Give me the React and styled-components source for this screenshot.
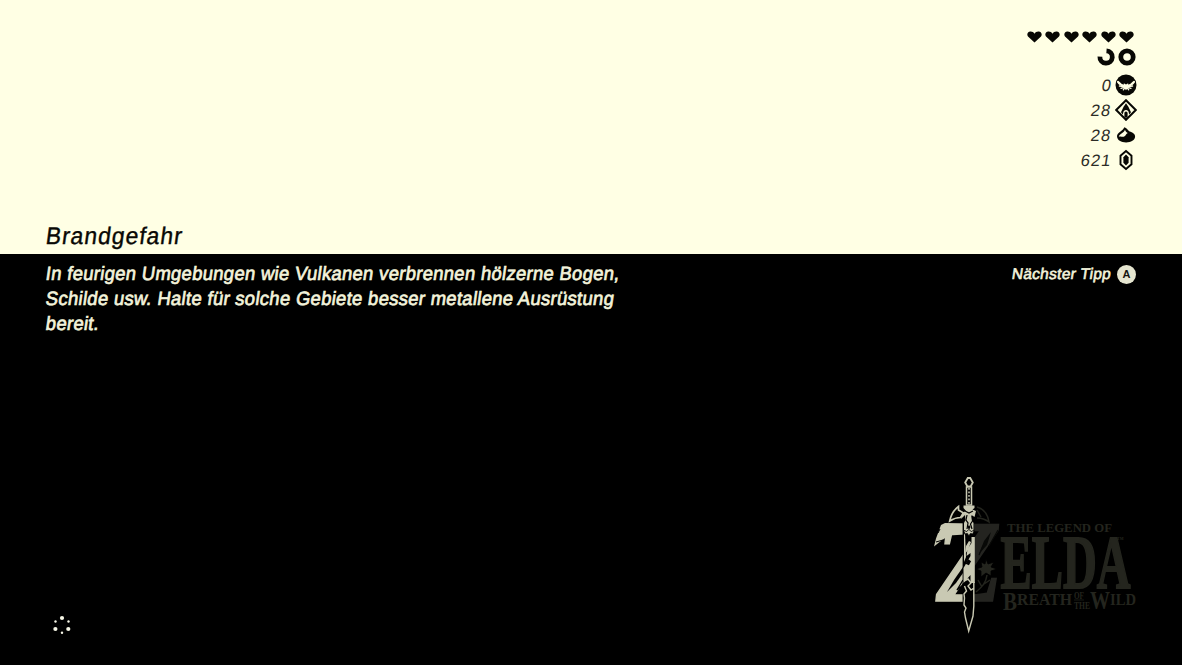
import React from "react";
import styled, { createGlobalStyle } from "styled-components";

const cream = "#ffffe4";
const ink = "#080804";
const pale = "#c9c9b3";
const faded = "#24251e";

const GlobalStyle = createGlobalStyle`
  * { box-sizing: border-box; }
  body { margin: 0; background: #000; overflow: hidden; }
`;

const Screen = styled.main`
  width: 1182px;
  height: 665px;
  display: flex;
  flex-direction: column;
  background: #000;
  font-family: "Liberation Sans", Arial, sans-serif;
`;

const Upper = styled.section`
  height: 254px;
  padding: 30px 45px 0 46px;
  display: flex;
  justify-content: space-between;
  background: ${cream};
  color: ${ink};
`;

const Title = styled.h1`
  margin: 0 0 4px;
  align-self: flex-end;
  font-size: 24px;
  line-height: 28px;
  font-weight: 400;
  letter-spacing: 1.1px;
  -webkit-text-stroke: 0.4px ${ink};
  transform: scaleX(0.95) skewX(-8deg);
  transform-origin: left center;
`;

const Status = styled.div`
  display: flex;
  flex-direction: column;
  align-items: flex-end;
`;

const Hearts = styled.div`
  display: flex;
  gap: 3.5px;
  height: 14px;
  margin-right: 3px;
  align-items: center;
`;

const Stamina = styled.div`
  display: flex;
  gap: 3px;
  height: 27px;
  padding-top: 4px;
  margin-bottom: 1px;
  margin-right: 1px;
`;

const Counter = styled.div`
  display: flex;
  align-items: center;
  gap: 4px;
  height: 25px;
  color: #2c2c26;
`;

const Amount = styled.span`
  font-size: 16.5px;
  line-height: 25px;
  letter-spacing: 1.1px;
  margin-right: -1px;
  padding-top: 1px;
  transform: skewX(-9deg);
`;

const Lower = styled.section`
  flex: 1;
  display: flex;
  flex-direction: column;
  justify-content: space-between;
  padding: 7px 45px 30px 46px;
  color: #f3f3db;
`;

const Row = styled.div`
  display: flex;
  justify-content: space-between;
  align-items: ${(p) => p.$align};
`;

const Tip = styled.p`
  margin: 0;
  display: flex;
  flex-direction: column;
  align-items: flex-start;
`;

const TipLine = styled.span`
  font-size: 19.2px;
  line-height: 25px;
  white-space: nowrap;
  letter-spacing: 0.33px;
  -webkit-text-stroke: 0.7px #f3f3db;
  transform: scaleX(0.96) skewX(-8.5deg);
  transform-origin: left center;
`;

const NextTip = styled.div`
  display: flex;
  align-items: center;
  gap: 6px;
  height: 26px;
  margin-right: 1px;
`;

const NextLabel = styled.span`
  font-size: 15.4px;
  letter-spacing: 0.33px;
  -webkit-text-stroke: 0.6px #f3f3db;
  transform: skewX(-8.5deg);
`;

const ButtonBadge = styled.span`
  width: 19px;
  height: 19px;
  border-radius: 50%;
  display: grid;
  place-items: center;
  background: #e6e6d0;
  color: #14140f;
  font-size: 11px;
  font-weight: 700;
`;

const Spinner = styled.svg`
  margin: 0 0 -2px 4px;
`;

const Logo = styled.svg`
  margin-right: -3px;
  overflow: visible;
  font-family: "Liberation Serif", "Times New Roman", serif;
  font-weight: 700;
`;

const Heart = () => (
  <svg width="15" height="12" viewBox="0 0 15 12">
    <path d="M7.5 11.6 1 5.4C-.4 3.7.3.6 3.4.5c1.9-.1 3.2.8 4.1 2.2C8.4 1.3 9.7.4 11.6.5c3.1.1 3.8 3.2 2.4 4.9Z" fill={ink} />
  </svg>
);

const Ring = ({ partial }) => (
  <svg width="18" height="18" viewBox="0 0 18 18" fill="none" stroke={ink} strokeWidth="4.8">
    {partial ? <path d="M9.5 2.8A6.2 6.2 0 1 1 2.9 8.6" /> : <circle cx="9" cy="9" r="6.2" />}
  </svg>
);

const ShrineIcon = () => (
  <svg width="22" height="22" viewBox="0 0 22 22">
    <circle cx="11" cy="11" r="10.5" fill={ink} />
    <g fill="none" stroke={cream} strokeLinecap="round">
      <path d="M9.6 11.8C7 11.4 4.6 10 3 7.8M12.4 11.8C15 11.4 17.4 10 19 7.8" strokeWidth="2.2" />
      <path d="M9 12.600 4.400 12M13 12.600 17.600 12M9.200 13.300 6 14.300M12.800 13.300 16 14.300M9.800 13.800 8.300 15.800M12.200 13.800 13.700 15.800" strokeWidth="1.300" />
    </g>
    <path d="M8.800 9.300 11 10.500l2.200-1.200-.5 4.700-1.700 2.300L9.300 14Z" fill={cream} />
  </svg>
);

const TowerIcon = () => (
  <svg width="22" height="22" viewBox="0 0 22 22">
    <path d="m11 1.200 9.800 9.800-9.800 9.800L1.200 11Z" fill="none" stroke={ink} strokeWidth="2" />
    <path d="M11 4.300 13.400 7.800 16 13.200 14.200 15.400 13.500 12.400Q11 9.800 8.500 12.400L7.800 15.400 6 13.200 8.600 7.800Z" fill={ink} />
    <path d="M9.400 17.500v-3.400a1.600 1.600 0 0 1 3.200 0v3.400L11 19.200Z" fill={ink} />
  </svg>
);

const SeedIcon = () => (
  <svg width="22" height="22" viewBox="0 0 22 22">
    <path d="M9.300 3.200c2.600.6 3.300 2.800 4.600 3.800 1.800 1.200 6.200 1.600 6.200 5.600 0 3.800-4.200 5.800-9 5.800S2 16 2 12.200C2 8.500 8 7 9.300 3.200Z" fill={ink} />
    <path d="M10 5.700c.3 1.600 1.600 2.600 2.800 3.400-2 .8-1.800 2.900-3.600 3.500-2 .7-3.200-.8-5.400.2C4.200 9.800 8.600 9.200 10 5.700Z" fill={cream} />
  </svg>
);

const RupeeIcon = () => (
  <svg width="22" height="22" viewBox="0 0 22 22">
    <path d="m11 2 5.500 4.700v8.600L11 20l-5.500-4.700V6.700Z" fill="none" stroke={ink} strokeWidth="1.900" />
    <path d="m11 5.500 2.600 2.700v5.600L11 16.500l-2.600-2.700V8.200Z" fill={ink} />
  </svg>
);

const counters = [
  { amount: "0", Icon: ShrineIcon },
  { amount: "28", Icon: TowerIcon },
  { amount: "28", Icon: SeedIcon },
  { amount: "621", Icon: RupeeIcon },
];

const dots = [
  [12, 5, 2.1], [18.5, 8.5, 1.2], [18.3, 16, 2.1], [12, 19.7, 1.2], [5.4, 16, 2.1], [5.5, 8.5, 1.2],
];

const GameLogo = () => (
  <Logo width="210" height="160" viewBox="930 475 210 160">
    <defs>
      <mask id="twoTone" maskUnits="userSpaceOnUse" x="925" y="475" width="90" height="160">
        <rect x="925" y="475" width="49.8" height="160" fill="#fff" />
        <rect x="974.8" y="475" width="40" height="160" fill="#fff" fillOpacity=".18" />
      </mask>
    </defs>

    <g mask="url(#twoTone)">
      <text transform="translate(931 601) skewX(-6)" fontSize="117" textLength="68" lengthAdjust="spacingAndGlyphs" fill={pale} stroke={pale} strokeWidth="1.5">Z</text>
      <path d="M941 525l4-2 20 .5v11l-16 1-6 4-4 3-5 4 2-8Z" fill={pale} />
    </g>
    <g fill="none" stroke="#000">
      <path d="M963 567 954 580l-7 12 9-9 7-10Z" fill="#000" stroke="none" />
      <path d="m963 580-6 10 5-4" strokeWidth="1.400" />
      <path d="m943 540-7 2m4-13-2 4" strokeWidth="1" />
      <path d="M991 532l-7 9-5 13 8-9Z" fill="#080907" stroke="none" />
      <path d="m998 530-9 16m-10 9 4-9" stroke="#080907" strokeWidth="1.200" />
    </g>

    <g fill={faded}>
      <text x="1007" y="531.500" fontSize="11.5" textLength="105" lengthAdjust="spacingAndGlyphs">THE LEGEND OF</text>
      <text x="1000.500" y="587.500" fontSize="76" textLength="130" lengthAdjust="spacingAndGlyphs" stroke={faded} strokeWidth="2">ELDA</text>
      <text x="1117" y="540" fontSize="4">TM</text>
      <text x="1003" y="610" fontSize="26" textLength="14" lengthAdjust="spacingAndGlyphs">B</text>
      <text x="1017" y="605" fontSize="17.500" textLength="55" lengthAdjust="spacingAndGlyphs">REATH</text>
      <text x="1074" y="598.500" fontSize="9.500" textLength="10" lengthAdjust="spacingAndGlyphs">OF</text>
      <text x="1074" y="608.500" fontSize="11" textLength="16" lengthAdjust="spacingAndGlyphs">THE</text>
      <text x="1090" y="609" fontSize="25" textLength="20" lengthAdjust="spacingAndGlyphs">W</text>
      <text x="1110" y="605" fontSize="17.500" textLength="26" lengthAdjust="spacingAndGlyphs">ILD</text>
    </g>
    <path d="M1074 600h10" stroke={faded} strokeWidth=".7" />

    <path d="M977 507c7 2 11 8 12 15-4-3-8-4-12-4m0-8 4 7" fill="none" stroke={faded} strokeWidth="1.500" />
    <g fill={faded} stroke="#000" strokeWidth=".8">
      <path d="m986 559 2 5 6-2-3 5 6 2-6 2 0 5-5-3-5 4 0-6-5-2 6-2-1-5 4 2Z" />
      <path d="M987 575c-1 8-5 12-11 17m8-8 6-4m-8 7-4-7" fill="none" stroke={faded} strokeWidth="1.500" />
    </g>

    <path d="M962.600 520h12.200v94l-6 19-6.200-19Z" fill="#000" />
    <g fill={pale}>
      <path d="M971.500 537h3.300v46h-4.300v-8l-7 8v-15l7-12v-3l-4 3 1-7 4-6Z" />
      <path d="m964 535 1-2 1 24-2 5Z" />
      <path d="m966 546 3-5 2 1-3 8-3 4Z" />
    </g>
    <path d="m968.300 559.300 2.800 2-2.200 4-3.400-1.500Z" fill="#000" />
    <path d="m964 581 4-2 3 4-3 3 3 4 3-2M964.500 586l2 5-2.500 3 .5 4-.5 7 2 3-1.500 4 1 6 3.200 13 4.300-15 .8-10v-24" fill="none" stroke={pale} strokeWidth="1.400" />

    <path d="M967.800 478h2.400l2.600 4.500-2.200 4h-3.200l-2.200-4Z" fill="#000" stroke={pale} strokeWidth="1.800" />
    <path d="M966.500 487h5v18h-5Z" fill="#000" stroke={pale} strokeWidth="1.500" />
    <path d="M969 488v17" stroke={pale} strokeWidth="1.500" strokeDasharray="1.700 1.800" />
    <path d="M958.500 506.500c-4 3-7.500 8-8.800 14.500 4-2.500 7-3.500 10.800-3.500l3-4.500-5-3Z" fill="#000" stroke={pale} strokeWidth="1.700" />
    <path d="M963.500 505.500h11v2.400l-2 1.500 3.500 1.500-1.500 6-3-2 .5 5 1.500 3v8h-9.500v-8l1.500-3-.5-5-4 4 1-6 4-2-2.500-3Z" fill={pale} />
    <path d="m965 511 4 2 4-2m-6 4-1 5 2 3-1 6m5-13 .5 5-2 3 1.500 5" fill="none" stroke="#000" strokeWidth="1.200" />
    <path d="m969 525 1.500 2-1.500 3-1.500-3Z" fill="#000" />
    <path d="m963.500 530 3 1.500 2.400-2 2.400 2 3-1.500-1.500 4-2.400-.5-1.500 2.500-1.500-2.500-2.400.5Z" fill={pale} stroke="#000" strokeWidth=".8" />
  </Logo>
);

export default function App() {
  return (
    <Screen>
      <GlobalStyle />
      <Upper>
        <Title>Brandgefahr</Title>
        <Status>
          <Hearts>
            {Array.from({ length: 6 }, (_, i) => <Heart key={i} />)}
          </Hearts>
          <Stamina>
            <Ring partial />
            <Ring />
          </Stamina>
          {counters.map(({ amount, Icon }, i) => (
            <Counter key={i}>
              <Amount>{amount}</Amount>
              <Icon />
            </Counter>
          ))}
        </Status>
      </Upper>
      <Lower>
        <Row $align="flex-start">
          <Tip>
            <TipLine>In feurigen Umgebungen wie Vulkanen verbrennen hölzerne Bogen,</TipLine>
            <TipLine>Schilde usw. Halte für solche Gebiete besser metallene Ausrüstung</TipLine>
            <TipLine>bereit.</TipLine>
          </Tip>
          <NextTip>
            <NextLabel>Nächster Tipp</NextLabel>
            <ButtonBadge>A</ButtonBadge>
          </NextTip>
        </Row>
        <Row $align="flex-end">
          <Spinner width="24" height="24" viewBox="0 0 24 24">
            {dots.map(([cx, cy, r], i) => <circle key={i} cx={cx} cy={cy} r={r} fill="#f6f6e6" />)}
          </Spinner>
          <GameLogo />
        </Row>
      </Lower>
    </Screen>
  );
}
